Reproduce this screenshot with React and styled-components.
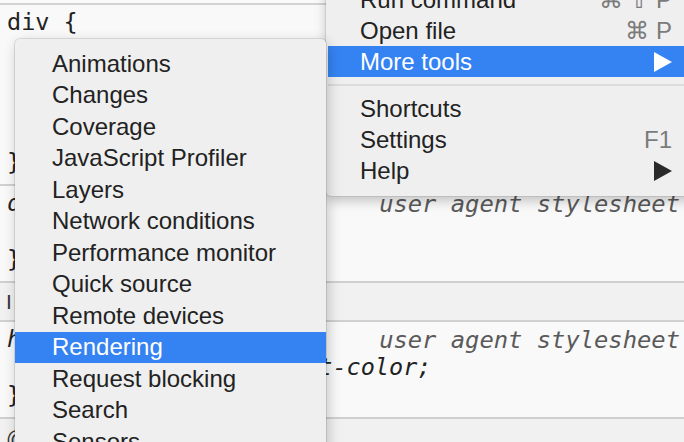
import React from "react";
import styled, { createGlobalStyle } from "styled-components";

const GlobalStyle = createGlobalStyle`
  html, body {
    margin: 0;
    padding: 0;
    background: #fafafa;
    overflow: hidden;
  }
`;

const paneSections = [
  {
    kind: "rule",
    lines: [
      { text: "div {" },
      { text: "" },
      { text: "" },
      { text: "" },
      { text: "" },
      { text: "}" },
    ],
  },
  {
    kind: "rule",
    origin: "user agent stylesheet",
    lines: [
      { text: "div {", italic: true },
      { text: "  display: block;", italic: true },
      { text: "}" },
    ],
  },
  { kind: "inherited", label: "Inherited from div" },
  {
    kind: "rule",
    origin: "user agent stylesheet",
    lines: [
      { text: "html {", italic: true },
      { text: "    color: -webkit-text-color;", italic: true },
      { text: "}" },
    ],
  },
  { kind: "inherited", label: "@media screen" },
];

const moreTools = [
  "Animations",
  "Changes",
  "Coverage",
  "JavaScript Profiler",
  "Layers",
  "Network conditions",
  "Performance monitor",
  "Quick source",
  "Remote devices",
  "Rendering",
  "Request blocking",
  "Search",
  "Sensors",
  "Security",
];

const Triangle = ({ color }) => (
  <svg width="18" height="20" viewBox="0 0 18 20">
    <path d="M0 0 L18 10 L0 20 Z" fill={color} />
  </svg>
);

export default function App() {
  return (
    <>
      <GlobalStyle />
      <Screen>
        <Pane>
          <TopStrip />
          {paneSections.map((s, i) =>
            s.kind === "inherited" ? (
              <InheritedBand key={i}>{s.label}</InheritedBand>
            ) : (
              <Rule key={i}>
                {s.origin && <Origin>{s.origin}</Origin>}
                {s.lines.map((l, j) => (
                  <CodeLine key={j} $italic={l.italic}>
                    {l.text || "\u00a0"}
                  </CodeLine>
                ))}
              </Rule>
            )
          )}
        </Pane>

        <MainMenu>
          <MenuItem>
            <span>Run command</span>
            <Shortcut>⌘ ⇧ P</Shortcut>
          </MenuItem>
          <MenuItem>
            <span>Open file</span>
            <Shortcut>⌘ P</Shortcut>
          </MenuItem>
          <MenuItem $active>
            <span>More tools</span>
            <Triangle color="#ffffff" />
          </MenuItem>
          <Separator />
          <MenuItem>
            <span>Shortcuts</span>
          </MenuItem>
          <MenuItem>
            <span>Settings</span>
            <Shortcut>F1</Shortcut>
          </MenuItem>
          <MenuItem>
            <span>Help</span>
            <Triangle color="#2a2a2a" />
          </MenuItem>
        </MainMenu>

        <SubMenu>
          {moreTools.map((t) => (
            <SubItem key={t} $active={t === "Rendering"}>
              {t}
            </SubItem>
          ))}
        </SubMenu>
      </Screen>
    </>
  );
}

const Screen = styled.div`
  position: relative;
  width: 684px;
  height: 442px;
  overflow: hidden;
  background: #fafafa;
`;

const Pane = styled.div`
  display: flex;
  flex-direction: column;
  width: 100%;
`;

const TopStrip = styled.div`
  height: 3px;
  background: #fafafa;
  border-bottom: 2px solid #d3d3d3;
`;

const Rule = styled.div`
  position: relative;
  display: flex;
  flex-direction: column;
  padding: 3px 0 8px 7px;
  background: #f9f9f9;
  border-bottom: 2px solid #d0d0d0;
`;

const CodeLine = styled.div`
  font-family: "DejaVu Sans Mono", "Liberation Mono", monospace;
  font-size: 23.5px;
  line-height: 28px;
  height: 28px;
  white-space: pre;
  color: #222;
  font-style: ${(p) => (p.$italic ? "italic" : "normal")};
`;

const Origin = styled.div`
  position: absolute;
  right: 4px;
  top: 4px;
  font-family: "DejaVu Sans Mono", "Liberation Mono", monospace;
  font-size: 23.8px;
  line-height: 28px;
  font-style: italic;
  color: #5a5a5a;
`;

const InheritedBand = styled.div`
  height: 37px;
  display: flex;
  align-items: center;
  padding-left: 6px;
  background: #f1f1f1;
  border-bottom: 2px solid #d0d0d0;
  font-family: "Liberation Sans", Arial, sans-serif;
  font-size: 21px;
  letter-spacing: 2px;
  color: #333;
`;

const MainMenu = styled.div`
  position: absolute;
  top: -22px;
  left: 326px;
  right: -10px;
  padding: 6px 0 10px 2px;
  background: #efefef;
  border-radius: 5px;
  box-shadow: 0 0 0 1px rgba(0, 0, 0, 0.08), 0 5px 12px rgba(0, 0, 0, 0.22);
  display: flex;
  flex-direction: column;
`;

const MenuItem = styled.div`
  height: 31px;
  display: flex;
  align-items: center;
  justify-content: space-between;
  padding: 0 22px 0 32px;
  font-family: "Liberation Sans", Arial, sans-serif;
  font-size: 24px;
  color: ${(p) => (p.$active ? "#fff" : "#222")};
  background: ${(p) => (p.$active ? "#3583f3" : "transparent")};
`;

const Shortcut = styled.span`
  color: #7b7b7b;
`;

const Separator = styled.div`
  height: 2px;
  margin: 7px 0 7px 0;
  background: #dcdcdc;
`;

const SubMenu = styled.div`
  position: absolute;
  top: 39px;
  left: 15px;
  width: 311px;
  padding-top: 9px;
  background: #efefef;
  border-radius: 5px;
  box-shadow: 0 0 0 1px rgba(0, 0, 0, 0.1), 2px 4px 14px rgba(0, 0, 0, 0.22);
  display: flex;
  flex-direction: column;
`;

const SubItem = styled.div`
  height: 31.5px;
  display: flex;
  align-items: center;
  padding-left: 37px;
  font-family: "Liberation Sans", Arial, sans-serif;
  font-size: 24px;
  color: ${(p) => (p.$active ? "#fff" : "#222")};
  background: ${(p) => (p.$active ? "#3583f3" : "transparent")};
`;
